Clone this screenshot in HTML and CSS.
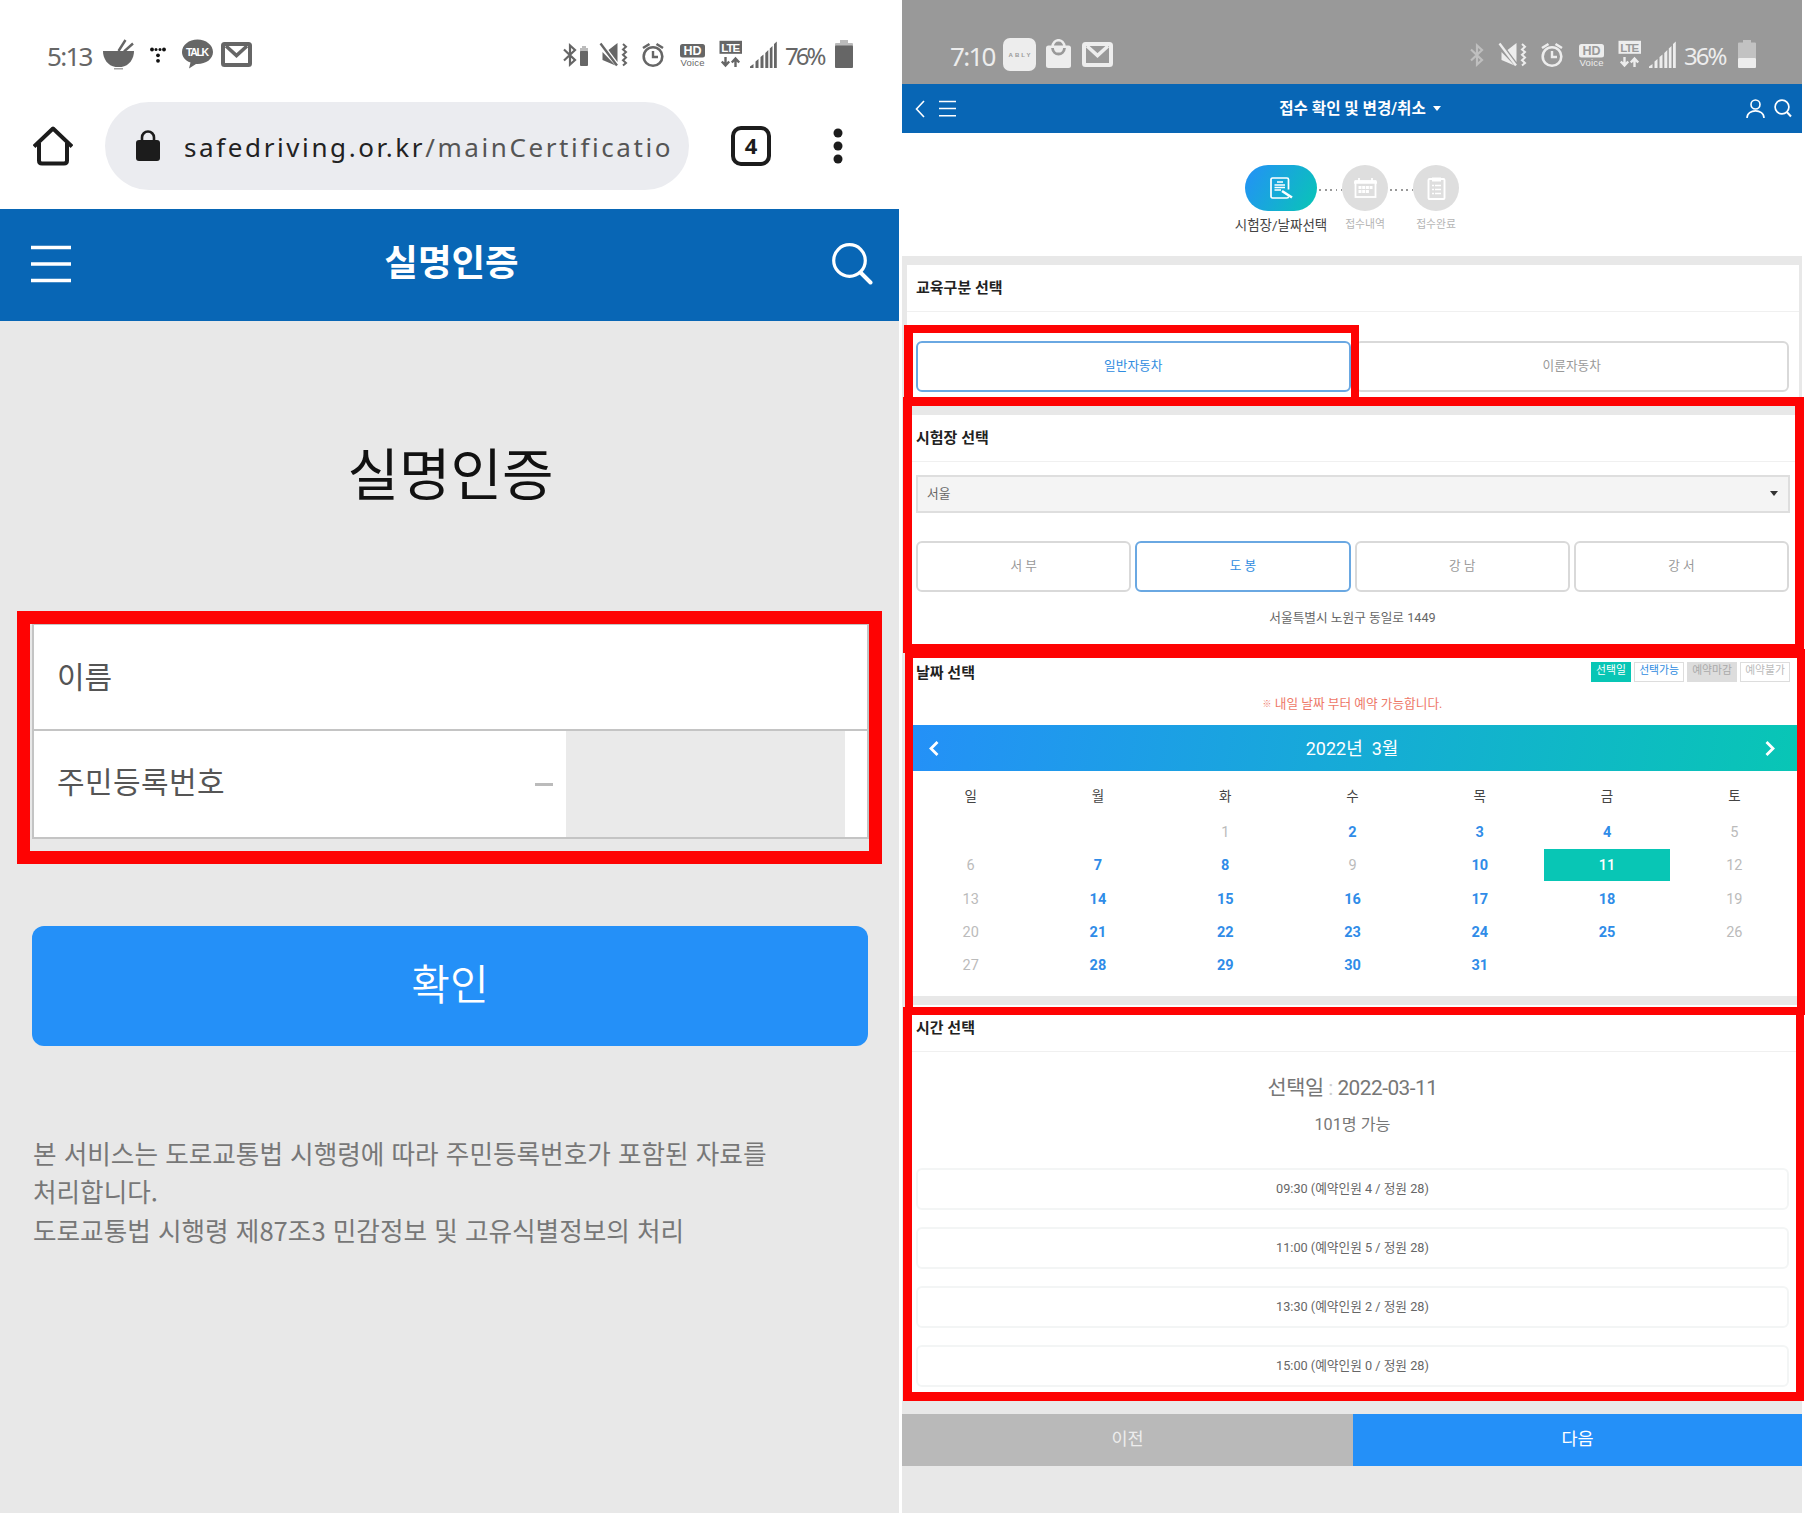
FILE: index.html
```html
<!DOCTYPE html>
<html lang="ko">

<head>
    <meta charset="utf-8">
    <title>실명인증</title>
    <link rel="stylesheet" href="styles.css">
</head>

<body>
    <!-- shared status icons -->
    <svg width="0" height="0" class="defs">
        <symbol id="mail" viewBox="0 0 31 25">
            <rect x="2" y="2" width="27" height="21" rx="1.5" fill="none" stroke="currentColor" stroke-width="4" />
            <path d="M5 4 L15.5 13.500 L26 4" fill="none" stroke="currentColor" stroke-width="3.600" />
        </symbol>
        <symbol id="status" viewBox="596 36 184 36" overflow="visible">
            <path d="M600.500 43.500 L617 65.500" stroke="currentColor" stroke-width="2.4" fill="none" />
            <path d="M608.500 50 L617.500 43 V62 Z M602.500 52 L615.500 65.500 L602.500 60 Z" fill="currentColor" />
            <path d="M623 44 l3 2.7 l-3 2.7 l3 2.7 l-3 2.7 l3 2.7 l-3 2.7 l3 2.7 l-3 2.7" stroke="currentColor" stroke-width="2" fill="none" />
            <circle cx="653" cy="56.5" r="9.3" stroke="currentColor" stroke-width="2.6" fill="none" />
            <path d="M653 51 V57 H658" stroke="currentColor" stroke-width="2.4" fill="none" />
            <path d="M643 48 L649.500 44 M656.500 44 L663 48" stroke="currentColor" stroke-width="2.6" fill="none" />
            <rect x="680" y="44" width="25" height="13.500" rx="2.5" fill="currentColor" />
            <rect x="719.5" y="40.800" width="22.500" height="13" fill="currentColor" />
            <path class="arrows" d="M725.5 57 V65 M721.800 61.500 L725.500 65.500 L729.200 61.500 M735.500 67 V59 M731.800 62.500 L735.500 58.500 L739.200 62.500" stroke="currentColor" stroke-width="2.4" fill="none" />
            <path d="M750 68 V66.500 L753.500 64 V68 Z M755.500 68 V61.500 L758.500 59 V68 Z M760.500 68 V57 L763.500 54.500 V68 Z M765.300 68 V53 L768.300 50 V68 Z M769.800 68 V48.500 L772.500 46 V68 Z M774 68 V44 L776.800 41.500 V68 Z" fill="currentColor" />
        </symbol>
        <symbol id="bt" viewBox="0 0 16 24">
            <path d="M2 6.500 L13 17 L8 21.500 V2.500 L13 7 L2 17.500" fill="none" stroke="currentColor" stroke-width="2.2" />
        </symbol>
    </svg>

    <div class="phone phone-left">
        <div class="status">
            <span class="clock">5:13</span>
            <svg class="bowl" width="31" height="31" viewBox="0 0 31 31" fill="currentColor">
                <path d="M0 12 H31 C31 20 26 27 18.500 28 H12.500 C5 27 0 20 0 12 Z" />
                <path d="M11 29 h9 v1.500 h-9 Z" opacity=".6" />
                <path d="M15.500 12 L22.500 1 M21 12.500 L30 4.500" stroke="currentColor" stroke-width="2.4" />
            </svg>
            <svg class="tdots" width="16" height="16" viewBox="0 0 16 16" fill="#111">
                <circle cx="2" cy="2.500" r="1.900" /><circle cx="6" cy="2.500" r="1.500" /><circle cx="10" cy="2.500" r="1.500" /><circle cx="14" cy="2.500" r="1.900" />
                <circle cx="8" cy="8.300" r="1.900" /><circle cx="8" cy="13.800" r="1.900" />
            </svg>
            <svg class="talk" width="31" height="30" viewBox="0 0 31 30">
                <path d="M15.500 0.500 C24 0.500 31 6 31 13 C31 20 24 25 15.500 25 L14 25 L7 29.500 L8.500 23.500 C3 21.500 0 17.500 0 13 C0 6 7 0.500 15.500 0.500 Z" fill="currentColor" />
                <text x="15.500" y="16.800" class="t-talk" textLength="23">TALK</text>
            </svg>
            <svg class="mail" width="31" height="25"><use href="#mail" /></svg>
            <span class="fill"></span>
            <svg class="bt" width="16" height="24"><use href="#bt" /></svg>
            <svg class="btbat" width="8" height="20" viewBox="0 0 8 20">
                <path d="M2 0 h4 v2 h2 v4 h-8 v-4 h2 Z" fill="#bbb" />
                <rect x="0" y="5" width="8" height="15" rx="1" fill="currentColor" />
            </svg>
            <svg class="icons" width="184" height="36">
                <use href="#status" />
                <text x="96.5" y="19.200" class="t-hd" textLength="18">HD</text>
                <text x="96.5" y="30" class="t-voice" textLength="24">Voice</text>
                <text x="134.700" y="15.500" class="t-lte" textLength="19">LTE</text>
            </svg>
            <span class="percent">76%</span>
            <svg class="battery" width="18" height="28" viewBox="0 0 18 28">
                <path d="M5 0 h8 v3 h4 a1 1 0 0 1 1 1 v4 h-18 v-4 a1 1 0 0 1 1 -1 h4 Z" fill="#bbb" />
                <rect x="0" y="5.500" width="18" height="22.500" rx="1" fill="currentColor" />
            </svg>
        </div>

        <div class="browser">
            <svg width="40" height="40" viewBox="0 0 40 40" fill="none" stroke="#1c1c1c" stroke-width="4" stroke-linejoin="round">
                <path d="M1 20.500 L20 2.500 L39 20.500 M6 17 V34.500 Q6 37.500 9 37.500 H31 Q34 37.500 34 34.500 V17" />
            </svg>
            <div class="url">
                <svg width="24" height="31" viewBox="0 0 24 31">
                    <rect x="0" y="10" width="24" height="21" rx="3" fill="#1c1c1c" />
                    <path d="M6 12 V7.500 a6 6 0 0 1 12 0 V12" fill="none" stroke="#1c1c1c" stroke-width="2.600" />
                </svg>
                <p>safedriving.or.kr<span>/mainCertificatio</span></p>
            </div>
            <div class="tabs">4</div>
            <svg class="more" width="10" height="36" viewBox="0 0 10 36" fill="#1c1c1c">
                <circle cx="5" cy="5" r="4.500" /><circle cx="5" cy="18" r="4.500" /><circle cx="5" cy="31" r="4.500" />
            </svg>
        </div>

        <div class="top">
            <svg width="40" height="38" viewBox="0 0 40 38" stroke="#fff" stroke-width="3.300"><path d="M0 2.500 H40 M0 19 H40 M0 35.500 H40" /></svg>
            <h2>실명인증</h2>
            <svg width="41" height="44" viewBox="0 0 41 44" fill="none" stroke="#fff" stroke-width="3.200" stroke-linecap="round">
                <circle cx="17.500" cy="18.500" r="15.800" /><path d="M28.500 30.500 L38.500 40.500" stroke-width="4" />
            </svg>
        </div>

        <div class="auth">
            <h1>실명인증</h1>
            <div class="form">
                <div class="field">이름</div>
                <div class="field"><span>주민등록번호</span><i class="dash"></i><i class="secret"></i></div>
                <div class="mark mark-form"></div>
            </div>
            <div class="confirm">확인</div>
            <p class="notice">본 서비스는 도로교통법 시행령에 따라 주민등록번호가 포함된 자료를<br>처리합니다.<br>도로교통법 시행령 제87조3 민감정보 및 고유식별정보의 처리</p>
        </div>
    </div>

    <div class="phone phone-right">
        <div class="status">
            <span class="clock">7:10</span>
            <svg class="ably" width="33" height="33" viewBox="0 0 33 33">
                <rect width="33" height="33" rx="7" fill="currentColor" />
                <text x="16.500" y="19" class="t-ably" textLength="22">ABLY</text>
            </svg>
            <svg class="bag" width="25" height="30" viewBox="0 0 25 30">
                <rect x="0" y="6.500" width="25" height="22.500" rx="2.500" fill="currentColor" />
                <path d="M6.500 8 C7 -1 18 -1 18.500 8" fill="none" stroke="currentColor" stroke-width="2.600" />
                <path d="M6.500 9 C7 17 18 17 18.500 9" fill="none" stroke="#999" stroke-width="2.800" />
            </svg>
            <svg class="mail" width="31" height="25"><use href="#mail" /></svg>
            <span class="fill"></span>
            <svg class="bt" width="16" height="24"><use href="#bt" /></svg>
            <svg class="icons" width="184" height="36">
                <use href="#status" />
                <text x="96.5" y="19.200" class="t-hd" textLength="18">HD</text>
                <text x="96.5" y="30" class="t-voice" textLength="24">Voice</text>
                <text x="134.700" y="15.500" class="t-lte" textLength="19">LTE</text>
            </svg>
            <span class="percent">36%</span>
            <svg class="battery" width="18" height="28" viewBox="0 0 18 28">
                <path d="M5 0 h8 v2.500 h4 a1 1 0 0 1 1 1 v15 h-18 v-15 a1 1 0 0 1 1 -1 h4 Z" fill="#c2c2c2" />
                <rect x="0" y="18" width="18" height="10" rx="1" fill="currentColor" />
            </svg>
        </div>

        <div class="nav">
            <svg class="back" width="10" height="18" viewBox="0 0 10 18" fill="none" stroke="#fff" stroke-width="1.600"><path d="M9 1 L1.500 9 L9 17" /></svg>
            <svg width="17" height="17" viewBox="0 0 17 17" stroke="#fff" stroke-width="1.600"><path d="M0 1.500 H17 M0 8.500 H17 M0 15.800 H17" /></svg>
            <h2>접수 확인 및 변경/취소 <svg width="8" height="5" viewBox="0 0 8 5" fill="#fff"><path d="M0 0 H8 L4 5 Z" /></svg></h2>
            <svg class="user" width="19" height="20" viewBox="0 0 19 20" fill="none" stroke="#fff" stroke-width="1.600">
                <circle cx="9.500" cy="5.500" r="4.500" /><path d="M1 19 C1 9.500 18 9.500 18 19" />
            </svg>
            <svg width="18" height="19" viewBox="0 0 18 19" fill="none" stroke="#fff" stroke-width="1.700">
                <circle cx="8" cy="8" r="6.900" /><path d="M12.800 13 L17 17.500" stroke-width="2" />
            </svg>
        </div>

        <div class="steps">
            <div class="step on">
                <div class="ball">
                    <svg width="23" height="23" viewBox="0 0 23 23" fill="none" stroke="#fff" stroke-width="1.700">
                        <path d="M18.500 12.500 V2.500 Q18.500 1 17 1 H2.500 Q1 1 1 2.500 V19.500 Q1 21 2.500 21 H17 Q18.500 21 18.500 19.500" />
                        <path d="M7 5 H13 M4.500 8 H15 M4.500 10.500 H15 M4.500 13 H11" stroke-width="1.300" />
                        <path d="M12 14 L22 20.500" stroke-width="2.600" />
                    </svg>
                </div>
                <span>시험장/날짜선택</span>
            </div>
            <i class="dots"></i>
            <div class="step">
                <div class="ball">
                    <svg width="23" height="20" viewBox="0 0 23 20" fill="none" stroke="#fff" stroke-width="1.800">
                        <rect x="1.500" y="3" width="20" height="16" /><path d="M0 4.500 H23" stroke-width="2.500" /><path d="M5 0 V4 M18 0 V4" />
                        <path d="M4.500 9.500 H18.500 M4.500 13.500 H15.500" stroke-width="3" stroke-dasharray="3 .7" />
                    </svg>
                </div>
                <span>접수내역</span>
            </div>
            <i class="dots"></i>
            <div class="step">
                <div class="ball">
                    <svg width="19" height="23" viewBox="0 0 19 23" fill="none" stroke="#fff" stroke-width="1.900">
                        <rect x="1.500" y="2" width="16" height="20" rx="1" /><path d="M5 2.500 H14" stroke-width="4" />
                        <path d="M5 8.500 H7 M8 8.500 H14 M5 12.500 H7 M8 12.500 H14 M5 16.500 H7 M8 16.500 H14" stroke-width="1.700" />
                    </svg>
                </div>
                <span>접수완료</span>
            </div>
        </div>

        <div class="card card-type">
            <h3>교육구분 선택</h3>
            <div class="choices two">
                <div class="choice on">일반자동차</div>
                <div class="choice">이륜자동차</div>
            </div>
        </div>

        <div class="card card-place">
            <h3>시험장 선택</h3>
            <div class="select">서울 <svg width="8" height="5" viewBox="0 0 8 5" fill="#333"><path d="M0 0 H8 L4 5 Z" /></svg></div>
            <div class="choices four">
                <div class="choice">서 부</div>
                <div class="choice on">도 봉</div>
                <div class="choice">강 남</div>
                <div class="choice">강 서</div>
            </div>
            <p class="address">서울특별시 노원구 동일로 1449</p>
        </div>

        <div class="card card-date">
            <h3>날짜 선택
                <span class="legend"><b class="sel">선택일</b><b class="can">선택가능</b><b class="full">예약마감</b><b>예약불가</b></span>
            </h3>
            <p class="warn"><small>※</small> 내일 날짜 부터 예약 가능합니다.</p>
            <div class="month">
                <svg width="10" height="15" viewBox="0 0 10 15" fill="none" stroke="#fff" stroke-width="2.800"><path d="M8.500 1 L2 7.500 L8.500 14" /></svg>
                <span>2022년&nbsp; 3월</span>
                <svg width="10" height="15" viewBox="0 0 10 15" fill="none" stroke="#fff" stroke-width="2.800"><path d="M1.500 1 L8 7.500 L1.500 14" /></svg>
            </div>
            <div class="week">
                <span>일</span><span>월</span><span>화</span><span>수</span><span>목</span><span>금</span><span>토</span>
            </div>
            <div class="days">
                <span></span><span></span><span>1</span><b>2</b><b>3</b><b>4</b><span>5</span>
                <span>6</span><b>7</b><b>8</b><span>9</span><b>10</b><b class="today">11</b><span>12</span>
                <span>13</span><b>14</b><b>15</b><b>16</b><b>17</b><b>18</b><span>19</span>
                <span>20</span><b>21</b><b>22</b><b>23</b><b>24</b><b>25</b><span>26</span>
                <span>27</span><b>28</b><b>29</b><b>30</b><b>31</b><span></span><span></span>
            </div>
        </div>

        <div class="card card-time">
            <h3>시간 선택</h3>
            <p class="picked">선택일 <i>:</i> 2022-03-11</p>
            <p class="remain">101명 가능</p>
            <div class="slots">
                <div>09:30 (예약인원 4 / 정원 28)</div>
                <div>11:00 (예약인원 5 / 정원 28)</div>
                <div>13:30 (예약인원 2 / 정원 28)</div>
                <div>15:00 (예약인원 0 / 정원 28)</div>
            </div>
        </div>

        <div class="bottom">
            <div class="prev">이전</div>
            <div class="next">다음</div>
        </div>

        <div class="mark mark-type"></div>
        <div class="mark mark-place"></div>
        <div class="mark mark-date"></div>
        <div class="mark mark-time"></div>
    </div>
</body>

</html>
```

FILE: styles.css
```css
* {
    box-sizing: border-box;
}

body {
    margin: 0;
    width: 1805px;
    height: 1513px;
    overflow: hidden;
    display: flex;
    gap: 3px;
    background-color: #fff;
    font-family: Roboto, "Noto Sans CJK KR", sans-serif;
}

h1, h2, h3, p {
    margin: 0;
}

i, b {
    font-style: normal;
}

svg {
    display: block;
    flex: none;
}

.defs {
    position: absolute;
}

.phone {
    position: relative;
    flex: none;
    height: 1513px;
    background-color: #e8e8e8;
}

.phone-left {
    width: 899px;
    font-family: "Noto Sans CJK KR", sans-serif;
}

.phone-right {
    width: 900px;
}

/* status bar */
.status {
    --bar: #fff;
    display: flex;
    align-items: flex-start;
    height: 84px;
    padding-left: 47px;
    background-color: var(--bar);
    color: #666;
}

.phone-right .status {
    --bar: #999;
    padding-left: 48px;
    color: #ededed;
}

.clock, .percent {
    font-family: "Noto Sans", sans-serif;
    font-size: 26px;
    line-height: 36px;
    margin-top: 38px;
    letter-spacing: -1.7px;
    white-space: nowrap;
}

.clock {
    width: 56px;
}

.phone-right .clock {
    width: 53px;
}

.percent {
    width: 50px;
    margin-left: 5px;
    font-size: 24px;
    letter-spacing: -3px;
}

.phone-right .percent {
    width: 54px;
    letter-spacing: -2px;
}

.fill {
    flex: 1;
}

.bowl {
    margin-top: 39px;
}

.tdots {
    margin: 47px 16px 0 16px;
}

.talk {
    margin-top: 39px;
    margin-right: 8px;
}

.mail {
    margin-top: 42px;
}

.ably {
    margin-top: 38px;
    margin-right: 10px;
}

.bag {
    margin-top: 39px;
    margin-right: 11px;
}

.bt {
    margin-top: 43px;
    margin-right: 2px;
}

.phone-right .bt {
    margin-right: 10px;
    opacity: .45;
}

.btbat {
    margin: 46px 8px 0 0;
}

.icons {
    margin-top: 36px;
    overflow: visible;
}

.phone-right .arrows {
    opacity: .4;
}

.battery {
    margin: 40px 46px 0 0;
}

.t-hd, .t-lte, .t-voice, .t-talk, .t-ably {
    font-family: "Liberation Sans", sans-serif;
    font-weight: bold;
    text-anchor: middle;
}

.t-hd {
    font-size: 12.5px;
    fill: var(--bar);
}

.t-lte {
    font-size: 11.5px;
    fill: var(--bar);
}

.t-voice {
    font-size: 9.5px;
    font-weight: normal;
    fill: currentColor;
}

.t-talk {
    font-size: 10.5px;
    fill: #fff;
}

.t-ably {
    font-size: 6px;
    fill: #999;
}

/* browser bar */
.browser {
    display: flex;
    align-items: center;
    height: 125px;
    padding: 0 56px 2px 33px;
    background-color: #fff;
}

.url {
    display: flex;
    align-items: center;
    width: 584px;
    height: 88px;
    margin-left: 32px;
    padding-left: 31px;
    border-radius: 44px;
    background-color: #ebecf0;
}

.url p {
    margin-left: 24px;
    padding-top: 3px;
    font-family: "Noto Sans", sans-serif;
    font-size: 26px;
    line-height: 36px;
    letter-spacing: 2.600px;
    white-space: nowrap;
    color: #222;
}

.url span {
    color: #555;
}

.tabs {
    width: 40px;
    height: 40px;
    margin-left: 42px;
    border: 4px solid #1c1c1c;
    border-radius: 10px;
    font: bold 22px/30px "Noto Sans", sans-serif;
    text-align: center;
    color: #1c1c1c;
}

.more {
    margin-left: 62px;
}

.top {
    display: flex;
    align-items: center;
    justify-content: space-between;
    height: 112px;
    padding: 0 26px 2px 31px;
    background-color: #0866b5;
}

.top h2 {
    font-size: 36.500px;
    line-height: 50px;
    padding-bottom: 7px;
    color: #fff;
}

/* real name form */
.auth {
    padding: 110px 30px 0 32px;
}

.auth h1 {
    height: 80px;
    font-size: 56px;
    font-weight: 400;
    line-height: 80px;
    text-align: center;
    color: #111;
}

.form {
    position: relative;
    margin-top: 112px;
    height: 216px;
    border: 2px solid #c4c4c4;
    background-color: #fff;
}

.field {
    display: flex;
    align-items: center;
    height: 104px;
    padding-left: 23px;
    padding-bottom: 4px;
    font-size: 30px;
    color: #555;
}

.field + .field {
    height: 108px;
    padding: 0 22px 0 23px;
    border-top: 2px solid #c4c4c4;
}

.field span {
    padding-bottom: 8px;
    letter-spacing: .4px;
}

.dash {
    width: 18px;
    height: 3px;
    margin-left: auto;
    margin-right: 13px;
    background-color: #bbb;
}

.secret {
    width: 279px;
    height: 100%;
    background-color: #eaeaea;
}

.confirm {
    width: 836px;
    height: 120px;
    margin-top: 87px;
    border-radius: 12px;
    background-color: #2490f8;
    font-size: 42px;
    font-weight: 350;
    line-height: 112px;
    text-align: center;
    color: #fff;
}

.notice {
    margin: 88px 0 0 1px;
    font-size: 25.620px;
    line-height: 38.300px;
    white-space: nowrap;
    color: #777;
}

/* reservation page */
.nav {
    display: flex;
    align-items: center;
    height: 49px;
    padding: 0 10px 0 13px;
    background-color: #0866b5;
}

.back {
    margin-right: 14px;
}

.nav h2 {
    flex: 1;
    display: flex;
    align-items: center;
    justify-content: center;
    gap: 7px;
    padding-left: 18px;
    font-size: 15.600px;
    line-height: 24px;
    color: #fff;
}

.user {
    margin-right: 9px;
}

.steps {
    display: flex;
    justify-content: center;
    height: 123px;
    padding-top: 32px;
    background-color: #fff;
}

.step {
    display: flex;
    flex-direction: column;
    align-items: center;
    width: 46px;
    font-size: 10.800px;
    line-height: 20px;
    white-space: nowrap;
    color: #b5b5b5;
}

.step.on {
    width: 72px;
    font-size: 13.500px;
    color: #444;
}

.ball {
    display: flex;
    align-items: center;
    justify-content: center;
    width: 100%;
    height: 46px;
    margin-bottom: 4px;
    border-radius: 23px;
    background-color: #dedede;
}

.on .ball {
    background: linear-gradient(120deg, #2490f8, #08c6b5);
}

.dots {
    width: 25px;
    margin-top: 24px;
    height: 2px;
    background: repeating-linear-gradient(90deg, transparent 0 2px, #999 2px 4px, transparent 4px 5.500px);
}

.card {
    margin: 9px 3px 0 5px;
    padding: 0 10px 0 9px;
    background-color: #fff;
}

.card h3 {
    display: flex;
    justify-content: space-between;
    align-items: center;
    height: 47px;
    margin: 0 -10px 0 -9px;
    padding: 0 9px 1px;
    border-bottom: 1px solid #f0f0f0;
    font-size: 15px;
    line-height: 20px;
    color: #222;
}

.choices {
    display: grid;
    gap: 4px;
}

.two {
    grid-template-columns: 1fr 1fr;
    margin-top: 29px;
}

.four {
    grid-template-columns: repeat(4, 1fr);
    margin-top: 28px;
}

.choice {
    height: 51px;
    border: 2px solid #d9d9d9;
    border-radius: 6px;
    font-size: 12.700px;
    line-height: 46px;
    text-align: center;
    color: #999;
}

.choice.on {
    border-color: #6aa8e2;
    color: #2f8ce0;
}

.card-type {
    height: 140px;
}

.card-place {
    height: 230px;
    margin-top: 10px;
}

.card-date {
    height: 344px;
    margin-top: 7px;
}

.select {
    display: flex;
    align-items: center;
    justify-content: space-between;
    height: 38px;
    margin-top: 13px;
    margin-right: -1px;
    padding: 0 10px 3px 9px;
    border: 2px solid #dedede;
    background-color: #f4f4f4;
    font-size: 12.700px;
    color: #666;
}

.select svg {
    margin-top: 2px;
}

.address {
    margin-top: 16px;
    font-size: 12.700px;
    line-height: 20px;
    text-align: center;
    color: #666;
}

.card-date h3 {
    height: 42px;
    padding-bottom: 0;
    border: 0;
}

.legend {
    display: flex;
    gap: 3px;
    margin-top: -3px;
}

.legend b {
    width: 50px;
    height: 20px;
    border: 1.500px solid #ddd;
    font-size: 10.800px;
    font-weight: 400;
    line-height: 16px;
    text-align: center;
    color: #bbb;
}

.legend .sel {
    width: 40px;
    border-color: #08c6b5;
    background-color: #08c6b5;
    color: #fff;
}

.legend .can {
    color: #2f8ce0;
}

.legend .full {
    background-color: #ddd;
    color: #aaa;
}

.warn {
    font-size: 12.700px;
    line-height: 20px;
    text-align: center;
    color: #ee7868;
}

.warn small {
    font-size: 9px;
    vertical-align: 1px;
}

.month {
    display: flex;
    align-items: center;
    justify-content: space-between;
    height: 46px;
    margin: 11px -10px 0 -9px;
    padding: 0 24px 0 22px;
    background: linear-gradient(100deg, #2490f8, #08c6b5);
    font-size: 18px;
    color: #fff;
}

.month span {
    padding-bottom: 2px;
}

.week, .days {
    display: grid;
    grid-template-columns: repeat(7, 1fr);
    margin: 0 -9px;
    text-align: center;
}

.week {
    padding-top: 8px;
    font-size: 13.500px;
    line-height: 34px;
    color: #444;
}

.days {
    padding-top: 3px;
    grid-auto-rows: 33.300px;
    font-size: 14.500px;
    line-height: 33px;
    color: #bbb;
}

.days b {
    color: #2f8ce8;
}

.days .today {
    height: 32px;
    margin: 0 .5px;
    background-color: #08c6b5;
    font-weight: 500;
    color: #fff;
}

.card-time {
    height: 391px;
}

.picked {
    margin-top: 21px;
    font-size: 20.800px;
    line-height: 30px;
    letter-spacing: -.5px;
    text-align: center;
    color: #777;
}

.picked i {
    color: #ccc;
}

.remain {
    margin-top: 10px;
    font-size: 16.200px;
    line-height: 24px;
    text-align: center;
    color: #777;
}

.slots {
    margin-top: 31px;
}

.slots div {
    height: 42px;
    margin-bottom: 17px;
    border: 2px solid #f3f5f5;
    border-radius: 6px;
    font-size: 12.700px;
    line-height: 37px;
    text-align: center;
    color: #666;
}

.bottom {
    display: flex;
    height: 52px;
    margin-top: 18px;
    font-size: 17.500px;
    line-height: 51px;
    text-align: center;
    color: #fff;
}

.prev {
    width: 451px;
    background-color: #b9b9b9;
    color: #ededed;
}

.next {
    flex: 1;
    background-color: #2490f8;
}

/* red highlight boxes laid over the screens */
.mark {
    position: absolute;
    border: 9px solid #fe0303;
}

.mark-form {
    left: -17px;
    top: -14px;
    width: 865px;
    height: 253px;
    border-width: 13px;
}

.mark-type {
    left: 2px;
    top: 325px;
    width: 455px;
    height: 80px;
    border-width: 8px 8px 8px 9px;
}

.mark-place {
    left: 1px;
    top: 397px;
    width: 901px;
    height: 256px;
}

.mark-date {
    left: 3px;
    top: 649px;
    width: 900px;
    height: 366px;
    border-width: 9px 8px 8px 8px;
}

.mark-time {
    left: 1px;
    top: 1007px;
    width: 901px;
    height: 394px;
    border-width: 8px 8px 9px 9px;
}
```
